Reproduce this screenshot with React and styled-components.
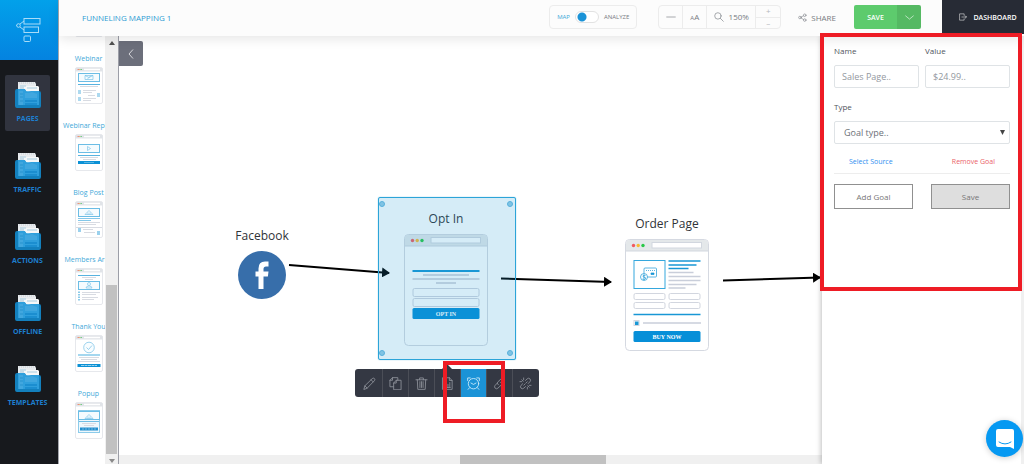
import React from 'react';
import styled, { createGlobalStyle, ThemeProvider } from 'styled-components';

const theme = {
  blue: '#1b93d7',
  lightBlue: '#3fa9d9',
  dark: '#343843',
  green: '#5dcb6d',
  red: '#ee1c25',
};

const GlobalStyle = createGlobalStyle`
  * {
    box-sizing: border-box;
  }

  body {
    background: #fff;
    color: #50545c;
    font-family: "Open Sans", "Noto Sans", sans-serif;
    font-size: 8px;
    margin: 0;
  }

  button, input, select {
    font-family: inherit;
    margin: 0;
  }

  button {
    cursor: pointer;
    padding: 0;
  }

  svg {
    display: block;
    flex: none;
  }
`;

const Shell = styled.div`
  display: flex;
  height: 100vh;
  overflow: hidden;
`;

/* Sidebar */

const Sidebar = styled.nav`
  background: #17191d;
  border-right: 1px solid #a5a7ae;
  flex: none;
  width: 59px;
`;

const Logo = styled.a`
  align-items: center;
  background: linear-gradient(#02a1ea, #0483e0);
  display: flex;
  height: 60px;
  justify-content: center;
`;

const SideList = styled.div`
  display: flex;
  flex-direction: column;
  gap: 15px;
  padding: 15px 8px 0 5px;
`;

const SideItem = styled.a`
  align-items: center;
  background: ${props => (props.$active ? '#31343f' : 'transparent')};
  border-radius: 2px;
  color: #1d7fd0;
  display: flex;
  flex-direction: column;
  font-size: 7px;
  font-weight: 700;
  gap: 6px;
  height: 56px;
  line-height: 10px;
  padding-top: 7px;
  text-decoration: none;
`;

/* Header */

const Main = styled.div`
  display: flex;
  flex: 1;
  flex-direction: column;
  min-width: 0;
`;

const Header = styled.header`
  align-items: center;
  background: #fcfcfc;
  box-shadow: 0 3px 12px rgba(0, 0, 0, 0.1);
  display: flex;
  flex: none;
  height: 36px;
  padding-left: 23px;
  position: relative;
  z-index: 2;
`;

const Title = styled.h1`
  color: #2d9bd3;
  flex: 1;
  font-size: 8px;
  font-weight: 400;
  margin: 0 0 2px;
`;

const Group = styled.div`
  align-items: center;
  border: 1px solid #ececec;
  border-radius: 4px;
  display: flex;
  height: 24px;
  margin-bottom: 2px;
`;

const ModeGroup = styled(Group)`
  gap: 5px;
  justify-content: center;
  margin-right: 21px;
  width: 88px;
`;

const ModeLabel = styled.span`
  color: ${props => (props.$active ? '#3fa9d9' : '#777b82')};
  font-size: 6px;
`;

const Switch = styled.input`
  appearance: none;
  background: radial-gradient(circle at 6px 5px, #1b93d7 4px, #fff 5px);
  border: 1px solid #e2e2e2;
  border-radius: 6px;
  height: 12px;
  margin: 0;
  width: 24px;
`;

const ZoomGroup = styled(Group)`
  margin-right: 17px;
`;

const ZoomCell = styled.button`
  align-items: ${props => (props.$letters ? 'baseline' : 'center')};
  background: none;
  border: 0;
  border-right: 1px solid #ececec;
  color: #777b82;
  display: flex;
  font-size: 8px;
  gap: ${props => (props.$letters ? 0 : 5)}px;
  height: 100%;
  justify-content: center;
  line-height: 22px;
  width: ${props => (props.$wide ? '49px' : '24px')};
`;

const SmallLetter = styled.span`
  font-size: 6px;
`;

const Stepper = styled.div`
  display: flex;
  flex-direction: column;
  height: 100%;
  width: 24px;
`;

const Step = styled.button`
  align-items: center;
  background: none;
  border: 0;
  color: #b5b7bb;
  display: flex;
  flex: 1;
  font-size: 8px;
  justify-content: center;
  line-height: 8px;

  & + & {
    border-top: 1px solid #ececec;
  }
`;

const Share = styled.button`
  align-items: center;
  background: none;
  border: 0;
  color: #777b82;
  display: flex;
  font-size: 8px;
  gap: 4px;
  margin: 0 18px 2px 0;
`;

const SaveGroup = styled.div`
  border-radius: 2px;
  display: flex;
  height: 24px;
  margin: 0 21px 2px 0;
  overflow: hidden;
`;

const SaveButton = styled.button`
  align-items: center;
  background: ${props => (props.$menu ? '#55b963' : props.theme.green)};
  border: 0;
  color: #fff;
  display: flex;
  font-size: 7px;
  font-weight: 600;
  justify-content: center;
  width: ${props => (props.$menu ? '24px' : '43px')};
`;

const Dashboard = styled.a`
  align-items: center;
  align-self: flex-start;
  background: #272b35;
  color: #fff;
  display: flex;
  font-size: 7px;
  font-weight: 600;
  gap: 6px;
  height: 34px;
  justify-content: center;
  padding-left: 10px;
  text-decoration: none;
  width: 82px;
`;

/* Thumbnails */

const Body = styled.div`
  display: flex;
  flex: 1;
  min-height: 0;
`;

const Library = styled.aside`
  border-right: 1px solid #9c9ea7;
  display: flex;
  flex: none;
  width: 60px;
`;

const LibraryView = styled.div`
  display: flex;
  flex: 1;
  flex-direction: column;
  gap: 15px;
  justify-content: flex-end;
  overflow: hidden;
  padding-bottom: 25px;
`;

const Thumb = styled.a`
  align-items: center;
  color: ${props => props.theme.lightBlue};
  display: flex;
  flex: none;
  flex-direction: column;
  font-size: 7px;
  gap: 2px;
  line-height: 13px;
  text-decoration: none;
  white-space: nowrap;
  width: 59px;
`;

const VScroll = styled.div`
  align-items: center;
  background: #f0f0f0;
  display: flex;
  flex-direction: column;
  padding: 5px 0 1px;
  width: 13px;
`;

const VThumb = styled.div`
  background: #c1c1c1;
  height: 40%;
  margin: auto 0 5px;
  width: 11px;
`;

/* Canvas */

const CanvasColumn = styled.main`
  display: flex;
  flex: 1;
  flex-direction: column;
  min-width: 0;
`;

const Canvas = styled.div`
  flex: 1;
  overflow: hidden;
  position: relative;
`;

const HScroll = styled.div`
  background: #f0f0f0;
  display: flex;
  height: 9px;
  justify-content: center;
`;

const HThumb = styled.div`
  background: #c1c1c1;
  margin-left: 124px;
  width: 146px;
`;

const Collapse = styled.button`
  align-items: center;
  background: #6c6f7b;
  border: 0;
  border-radius: 0 2px 2px 0;
  display: flex;
  height: 25px;
  justify-content: center;
  left: 0;
  position: absolute;
  top: 5px;
  width: 24px;
`;

const Node = styled.div`
  align-items: center;
  color: #303338;
  display: flex;
  flex-direction: column;
  font-size: 12px;
  gap: 7px;
  left: ${props => props.$x}px;
  line-height: 16px;
  position: absolute;
  top: ${props => props.$y}px;
  width: 84px;
`;

const Arrows = styled.svg`
  left: 0;
  overflow: visible;
  position: absolute;
  top: 0;
`;

const Selection = styled.div`
  background: rgba(31, 155, 212, 0.19);
  border: 1px solid #2ca4d8;
  border-radius: 2px;
  box-shadow: 0 0 1px #2ca4d8;
  height: 163px;
  left: 259px;
  position: absolute;
  top: 161px;
  width: 138px;
`;

const Handle = styled.i`
  background: #80c3e4;
  border: 1px solid #58b1dc;
  border-radius: 50%;
  height: 6px;
  position: absolute;
  width: 6px;
  ${props => props.$v}: 3px;
  ${props => props.$h}: ${props => (props.$h === 'left' ? '0' : '2px')};
`;

const Toolbar = styled.div`
  background: ${props => props.theme.dark};
  border-radius: 3px;
  display: flex;
  height: 28px;
  left: 236px;
  padding: 0 1px;
  position: absolute;
  top: 333px;

  &::before {
    border: 5px solid transparent;
    border-bottom-color: ${props => props.theme.dark};
    border-top: 0;
    bottom: 100%;
    content: "";
    left: calc(50% - 5px);
    position: absolute;
  }
`;

const Tool = styled.button`
  align-items: center;
  background: ${props => (props.$active ? props.theme.blue : 'transparent')};
  border: 0;
  color: ${props => (props.$active ? '#d5eefb' : '#92959e')};
  display: flex;
  justify-content: center;
  width: 26px;

  & + & {
    border-left: 1px solid #4b4e57;
  }
`;

const Highlight = styled.div`
  border: 4px solid ${props => props.theme.red};
  pointer-events: none;
  position: absolute;
  z-index: 3;
`;

const ToolHighlight = styled(Highlight)`
  height: 62px;
  left: 324px;
  top: 325px;
  width: 62px;
`;

const PanelHighlight = styled(Highlight)`
  height: 258px;
  left: -2px;
  right: -1px;
  top: -3px;
`;

/* Goal panel */

const Panel = styled.aside`
  background: #fff;
  border-right: 3px solid #f0f0f0;
  box-shadow: -1px 0 5px rgba(0, 0, 0, 0.25);
  flex: none;
  padding: 8px 11px 0 12px;
  position: relative;
  width: 202px;
`;

const Form = styled.form`
  display: flex;
  flex-direction: column;
`;

const Fields = styled.div`
  display: grid;
  gap: 6px;
  grid-template-columns: 1fr 1fr;
  margin-bottom: 12px;
`;

const Field = styled.label`
  color: #50545c;
  display: flex;
  flex-direction: column;
  font-size: 8px;
  gap: 7px;
  line-height: 14px;
  min-width: 0;
`;

const Input = styled.input`
  background: #fff;
  border: 1px solid #dfe3e6;
  border-radius: 2px;
  font-size: 9px;
  height: 23px;
  padding: 0 7px;
  width: 100%;

  &::placeholder {
    color: #9398a0;
  }
`;

const SelectBox = styled.span`
  align-items: center;
  display: grid;

  & > * {
    grid-area: 1 / 1;
  }

  svg {
    justify-self: end;
    margin-right: 5px;
    pointer-events: none;
  }
`;

const Select = styled.select`
  appearance: none;
  background: #fff;
  border: 1px solid #dfe3e6;
  border-radius: 2px;
  color: #6c7178;
  font-size: 9px;
  height: 23px;
  padding: 0 9px;
  width: 100%;
`;

const Links = styled.div`
  border-bottom: 1px solid #ededed;
  display: flex;
  justify-content: space-between;
  margin-bottom: 10px;
  padding: 11px 15px 4px;
`;

const LinkButton = styled.button`
  background: none;
  border: 0;
  color: ${props => (props.$danger ? '#ea5f69' : '#2f8ff0')};
  font-size: 7px;
  line-height: 14px;
`;

const Actions = styled.div`
  display: grid;
  gap: 18px;
  grid-template-columns: 1fr 1fr;
`;

const Action = styled.button`
  background: ${props => (props.$filled ? '#dedede' : '#fff')};
  border: 1px solid #909090;
  color: #777;
  font-size: 8px;
  height: 25px;
`;

const Launcher = styled.button`
  align-items: center;
  background: #0699f2;
  border: 0;
  border-radius: 50%;
  bottom: 7px;
  box-shadow: 0 1px 6px rgba(0, 0, 0, 0.2);
  display: flex;
  height: 37px;
  justify-content: center;
  position: fixed;
  right: 1px;
  width: 37px;
  z-index: 4;
`;

/* Icons */

const Icon = ({ size = 14, box = 14, children }) => (
  <svg
    width={size}
    height={size}
    viewBox={`0 0 ${box} ${box}`}
    fill="none"
    stroke="currentColor"
    strokeWidth="0.9"
    strokeLinejoin="round"
    strokeLinecap="round"
  >
    {children}
  </svg>
);

const LogoIcon = () => (
  <svg width="26" height="26" viewBox="0 0 26 26" fill="none" stroke="#a9dcf8" strokeWidth="1">
    <rect x="8" y="1.5" width="16" height="5.5" />
    <rect x="8" y="10" width="14.5" height="5.5" />
    <rect x="8" y="19" width="6.5" height="5.5" rx="1" />
    <circle cx="2.5" cy="8.5" r="1.8" />
    <path d="M4 7 8 4M4 10 8 13M0 8.5h.7" />
  </svg>
);

const FolderIcon = () => (
  <svg width="26" height="26" viewBox="0 0 26 26">
    <path d="M3 0h17l1 2v13H3z" fill="#e8ebee" />
    <path d="M4 1h16" stroke="#c7ced4" strokeDasharray="1 1" />
    <path d="M9 4h14l1 1v13H9z" fill="#f5f7f8" />
    <path d="M12 6h10M5 4h6M5 6h4" stroke="#a9cde0" />
    <path d="M0 9q0-2 2-2h7q1 0 2 2h13q2 0 2 2v13q0 2-2 2H2q-2 0-2-2z" fill="#1380bd" />
    <path d="M3 7h6q1 0 2 2h13v14H3z" fill="#2f9fdc" />
    <path d="M11 9q4 1 8-1l4 1z" fill="#f5f7f8" />
    <path d="M4 9h4v14H4zM10 11h4l3-1 5 2v4H10z" fill="#53b0e2" opacity="0.5" />
    <path d="M10 19h12M10 22h12" stroke="#1689cb" strokeWidth="1.5" />
    <path d="M5 12h3M5 15h3M5 19h3" stroke="#1687c7" strokeWidth="0.6" />
  </svg>
);

const tools = [
  {
    label: 'Edit',
    icon: <path d="m1 13 1-3.500L10 1.700q1.300-1 2.300 0t0 2.300L4.500 12zM8.700 3 11 5.300M2 9.500 4.500 12" />,
  },
  {
    label: 'Duplicate',
    icon: <path d="M4.500 10.500H1v-7L3.800.7h5.700v2.800M1 3.500h2.800V.7M5 13.300V6.500l2.800-3H13v9.800zM5 6.500h2.800v-3" />,
  },
  {
    label: 'Delete',
    icon: <path d="M1 3h12M5 3V1h4v2M2.500 3l.5 10.300h8l.5-10.300M5.300 5v6.300M7 5v6.300M8.700 5v6.300" />,
  },
  {
    label: 'Stats',
    icon: <path d="M2 .8h7l3 3v9.500H2zM9 .8v3h3M4.500 11V8M6 11V6.500M7.500 11V8M9.500 11V6M4 11.300h6" />,
  },
  {
    label: 'Goals',
    active: true,
    icon: (
      <>
        <circle cx="7" cy="7.200" r="5.600" />
        <path d="M4.300 6.500 7 8l2.700-1.500M.7 3.800V1h2.800M13.300 3.800V1h-2.800M2.800 11.500 1.200 13.300M11.200 11.500l1.600 1.800" />
      </>
    ),
  },
  {
    label: 'Link',
    icon: <path d="m6 8.500-1-1q-.8-1 0-2L8.700 2q1.600-1.400 3 0t0 3L9.500 7.300M8 5.500l1 1q.8 1 0 2L5.300 12q-1.600 1.400-3 0t0-3l2.200-2.300" />,
  },
  {
    label: 'Unlink',
    icon: <path d="M7 3.700 8.800 2q1.600-1.400 3 0t0 3L10 7M7 10.300 5.200 12q-1.600 1.400-3 0t0-3L4 7.200M8.800 5.200 7.500 6.500M5.200 8.800l1.300-1.300M3 3l1.500 1.500M5 1v2M1 5h2M9.500 9.500 11 11M9 11v2M11 9h2" />,
  },
];

const Frame = ({ children }) => (
  <svg width="28" height="37" viewBox="0 0 28 37">
    <rect x="0.5" y="0.5" width="27" height="36" rx="1.500" fill="#fff" stroke="#e6e8ec" />
    <path d="M0.500 1h27v3.500h-27z" fill="#e1e4e8" />
    <path d="M9 2.500h16" stroke="#fff" strokeWidth="1.500" />
    <path d="M2.500 2.500h1.500" stroke="#ec8c83" />
    <path d="M4 2.500h1.500" stroke="#e5c078" />
    <path d="M5.500 2.500H7" stroke="#72ce8b" />
    {children}
  </svg>
);

const Picture = ({ y, children }) => (
  <g fill="none" stroke="#6bbde5">
    <rect x="3.500" y={y + 0.5} width="21" height="8" fill="#f5fbfe" />
    <g strokeWidth="0.6">{children}</g>
  </g>
);

const Lines = ({ d, color = '#d8dbe2' }) => <path d={d} stroke={color} />;

const thumbs = [
  { name: '', art: null },
  {
    name: 'Webinar',
    art: (
      <>
        <Picture y={6}><path d="M10 8.500h8v4h-8zM10 8.500l4 2 4-2M12 12.500l4-4" /></Picture>
        <Lines d="M3 17.500h22" color="#58b3e0" />
        <Lines d="M5 19.500h18M8 23.500h13M8 25.500h9M13 28.500h7M8 31.500h13M8 33.500h8" />
        <g fill="#add9ef"><path d="M3 23h3v4H3zM22 26h3v4h-3zM3 30h3v4H3z" /></g>
      </>
    ),
  },
  {
    name: 'Webinar Replay',
    art: (
      <>
        <Picture y={10}><path d="m12.500 12.500 3 2-3 2z" /></Picture>
        <Lines d="M3 21.500h22" color="#58b3e0" />
        <Lines d="M5 23.500h18M8 25.500h13" />
        <path d="M3 27h22v3H3z" fill="#0b91d5" />
        <path d="M9 28.500h10" stroke="#8cccec" strokeWidth="0.600" />
      </>
    ),
  },
  {
    name: 'Blog Post',
    art: (
      <>
        <Picture y={7}><path d="m10 13.500 4-4 4 4zM13 11.500v2M15 11.500v2" /></Picture>
        <Lines d="M3 17.500h22M3 19.500h13" color="#83c7e9" />
        <Lines d="M3 21.500h22M3 23.500h18M1 26.500h26M8 28.500h10M9 31.500h11" />
        <g fill="#9bd1ed"><path d="M3 27h3v4H3zM22 30h3v4h-3z" /></g>
      </>
    ),
  },
  {
    name: 'Members Area',
    art: (
      <>
        <Lines d="M3 7.500h22" color="#58b3e0" />
        <Lines d="M7 9.500h14M10 11.500h8M7 24.500h18M7 26.500h14M7 29.500h16M7 31.500h12" />
        <Picture y={13}><circle cx="14" cy="16" r="1.500" /><path d="M11 20q0-2 3-2t3 2z" /></Picture>
        <path d="M4 23.500v10" stroke="#65b9e2" strokeWidth="1.500" strokeDasharray="1.500 1" />
      </>
    ),
  },
  {
    name: 'Thank You',
    art: (
      <>
        <circle cx="14" cy="12.500" r="5.300" fill="#f8fdff" stroke="#72bfe5" strokeWidth="0.700" />
        <path d="m11.500 12.500 2 2 3.500-4" fill="none" stroke="#72bfe5" strokeWidth="0.700" />
        <path d="M3 20h22" stroke="#a4d7ef" strokeWidth="2" />
        <Lines d="M4 22.500h20M6 24.500h16M3 26.500h22" />
        <path d="M2.500 29h23v3h-23z" fill="#0b91d5" />
        <path d="M6 30.500h16" stroke="#b6def2" strokeWidth="0.800" strokeDasharray="3 0.500" />
      </>
    ),
  },
  {
    name: 'Popup',
    art: (
      <>
        <rect x="3.500" y="8.500" width="21" height="22" fill="#edf8fd" stroke="#8ccbea" />
        <Picture y={9}><path d="m10 16.500 4-4 4 4zM13 14.500v2M15 14.500v2" /></Picture>
        <Lines d="M4 19.500h20" color="#6dbde4" />
        <Lines d="M7 21.500h14M9 23.500h10" />
        <path d="M5 25.500h18v3H5z" fill="#218fce" />
        <path d="M7 27h14" stroke="#a3d4ee" strokeWidth="0.600" strokeDasharray="2 1" />
      </>
    ),
  },
];

const PageArt = ({ children }) => (
  <svg width="84" height="112" viewBox="0 0 84 112">
    <rect x="0.500" y="0.500" width="83" height="111" rx="4" fill="#fff" stroke="#d5d9e1" />
    <path d="M1 12V4.500Q1 1 4.500 1h75Q83 1 83 4.500V12z" fill="#e4e8ea" />
    <path d="M1 12h82" stroke="#d2d7df" />
    <circle cx="8.500" cy="6.500" r="1.700" fill="#f15a60" />
    <circle cx="13.200" cy="6.500" r="1.700" fill="#f8bb33" />
    <circle cx="18" cy="6.500" r="1.700" fill="#28c847" />
    <rect x="27" y="3.500" width="49.500" height="5.500" fill="#fff" stroke="#d2d7df" />
    {children}
  </svg>
);

const ArtButton = ({ y, children }) => (
  <>
    <rect x="8.500" y={y} width="67" height="11" rx="1.500" fill="#078fd8" />
    <text
      x="42"
      y={y + 7.600}
      fill="#fff"
      fontFamily="Liberation Serif, serif"
      fontSize="6"
      fontWeight="700"
      textAnchor="middle"
    >
      {children}
    </text>
  </>
);

const OptInArt = () => (
  <PageArt>
    <path d="M8.500 37h67" stroke="#1897d5" strokeWidth="2" />
    <path d="M19 41h46M8.500 45h67M32 49h20" stroke="#c7ccd8" strokeWidth="1.500" />
    <g fill="#fff" stroke="#d0d4df">
      <rect x="9" y="54.500" width="66" height="8" rx="1.500" />
      <rect x="9" y="64.500" width="66" height="8" rx="1.500" />
    </g>
    <ArtButton y={74}>OPT IN</ArtButton>
  </PageArt>
);

const OrderArt = () => (
  <PageArt>
    <rect x="9" y="21.500" width="31" height="28" fill="#fff" stroke="#35a7dd" />
    <g fill="#fff" stroke="#1897d5" strokeWidth="0.700">
      <rect x="19" y="29" width="12.500" height="9" rx="1" />
      <path d="M21 31.500h9" strokeDasharray="1 1" />
      <path d="M26 34h3v1.500h-3z" fill="#1897d5" />
      <circle cx="19" cy="38" r="3.500" />
      <path d="M20.500 36.500q-2.500-1-2.500.5t2 1.500-.5 2l-2-.500M19 35.500v5" fill="none" />
    </g>
    <path d="M43.500 22h32M43.500 26h28M43.500 29.500h20" stroke="#1897d5" strokeWidth="1.500" />
    <path d="M43.500 33.500h25M43.500 37.500h32M43.500 41.500h32M43.500 45.500h28M43.500 49h17M18 84h58" stroke="#c9ceda" strokeWidth="1.500" />
    <g fill="#fff" stroke="#d2d6df">
      <rect x="9" y="54.500" width="31" height="6" rx="1.500" />
      <rect x="44" y="54.500" width="31" height="6" rx="1.500" />
      <rect x="9" y="63.500" width="31" height="6" rx="1.500" />
      <rect x="44" y="63.500" width="31" height="6" rx="1.500" />
      <rect x="9" y="81.500" width="5" height="5" />
    </g>
    <path d="M8.500 75.500h67" stroke="#1897d5" strokeWidth="1.500" />
    <path d="M10 82.500h3.500V86H10z" fill="#1897d5" />
    <ArtButton y={92}>BUY NOW</ArtButton>
  </PageArt>
);

const FacebookIcon = () => (
  <svg width="48" height="48" viewBox="0 0 48 48">
    <circle cx="24" cy="24" r="24" fill="#376eaa" />
    <path d="M20.500 38V25.500H17.500V20.500h3v-3q0-7 6.500-7h3.500v5h-2.500q-2.500 0-2.500 2.500v2.500h5l-.6 5h-4.400V38z" fill="#fff" />
  </svg>
);

const App = () => (
  <ThemeProvider theme={theme}>
    <GlobalStyle />
    <Shell>
      <Sidebar>
        <Logo href="#home" aria-label="Home"><LogoIcon /></Logo>
        <SideList>
          {['PAGES', 'TRAFFIC', 'ACTIONS', 'OFFLINE', 'TEMPLATES'].map((name, i) => (
            <SideItem key={name} href={`#${name.toLowerCase()}`} $active={i === 0}>
              <FolderIcon />
              {name}
            </SideItem>
          ))}
        </SideList>
      </Sidebar>

      <Main>
        <Header>
          <Title>FUNNELING MAPPING 1</Title>
          <ModeGroup>
            <ModeLabel $active>MAP</ModeLabel>
            <Switch type="checkbox" aria-label="Analyze mode" />
            <ModeLabel>ANALYZE</ModeLabel>
          </ModeGroup>
          <ZoomGroup>
            <ZoomCell aria-label="Line style">
              <Icon size={10}><path d="M1 7h12" /></Icon>
            </ZoomCell>
            <ZoomCell aria-label="Text size" $letters><SmallLetter>A</SmallLetter>A</ZoomCell>
            <ZoomCell $wide>
              <Icon size={10}><circle cx="5.500" cy="5.500" r="4.500" /><path d="m9 9 4 4" /></Icon>
              150%
            </ZoomCell>
            <Stepper>
              <Step aria-label="Zoom in">+</Step>
              <Step aria-label="Zoom out">–</Step>
            </Stepper>
          </ZoomGroup>
          <Share>
            <Icon size={9}>
              <circle cx="3" cy="7" r="2" />
              <circle cx="10.500" cy="3.500" r="2" />
              <circle cx="10.500" cy="11" r="2" />
              <path d="m5 6 3.500-1.500M5 8l3.500 2" />
            </Icon>
            SHARE
          </Share>
          <SaveGroup>
            <SaveButton>SAVE</SaveButton>
            <SaveButton $menu aria-label="Save options">
              <Icon size={9}><path d="m1 4.500 6 5 6-5" /></Icon>
            </SaveButton>
          </SaveGroup>
          <Dashboard href="#dashboard">
            <Icon size={8}><path d="M9 4V1.500H1v11h8V10M5 7h8M11 5l2 2-2 2" /></Icon>
            DASHBOARD
          </Dashboard>
        </Header>

        <Body>
          <Library>
            <LibraryView>
              {thumbs.map(({ name, art }) => (
                <Thumb key={name} href={`#${name}`}>
                  {name}
                  <Frame>{art}</Frame>
                </Thumb>
              ))}
            </LibraryView>
            <VScroll>
              <svg width="6" height="4" viewBox="0 0 6 4"><path d="m0 4 3-4 3 4z" fill="#505050" /></svg>
              <VThumb />
              <svg width="6" height="4" viewBox="0 0 6 4"><path d="m0 0 3 4 3-4z" fill="#8a8a8a" /></svg>
            </VScroll>
          </Library>

          <CanvasColumn>
            <Canvas>
              <Collapse aria-label="Collapse library">
                <svg width="6" height="10" viewBox="0 0 6 10" fill="none" stroke="#d5d6da">
                  <path d="M5 0.500 1 5l4 4.500" />
                </svg>
              </Collapse>
              <Node $x={101} $y={192}>
                Facebook
                <FacebookIcon />
              </Node>
              <Node $x={285} $y={175}>
                Opt In
                <OptInArt />
              </Node>
              <Node $x={506} $y={180}>
                Order Page
                <OrderArt />
              </Node>
              <Arrows width="703" height="419" viewBox="0 0 703 419" fill="none" stroke="#000" strokeWidth="2">
                <defs>
                  <marker id="head" viewBox="0 0 8 10" refX="7" refY="5" markerWidth="8" markerHeight="10" markerUnits="userSpaceOnUse" orient="auto">
                    <path d="M0 0 8 5 0 10z" fill="#000" stroke="none" />
                  </marker>
                </defs>
                <path d="m170 229 100 8" markerEnd="url(#head)" />
                <path d="m382 242.500 110 3.500" markerEnd="url(#head)" />
                <path d="m604 244.500 97-3" markerEnd="url(#head)" />
              </Arrows>
              <Selection>
                <Handle $v="top" $h="left" />
                <Handle $v="top" $h="right" />
                <Handle $v="bottom" $h="left" />
                <Handle $v="bottom" $h="right" />
              </Selection>
              <Toolbar>
                {tools.map(({ label, icon, active }) => (
                  <Tool key={label} aria-label={label} $active={active}>
                    <Icon size={13}>{icon}</Icon>
                  </Tool>
                ))}
              </Toolbar>
              <ToolHighlight />
            </Canvas>
            <HScroll><HThumb /></HScroll>
          </CanvasColumn>

          <Panel>
            <Form onSubmit={e => e.preventDefault()}>
              <Fields>
                <Field>Name<Input placeholder="Sales Page.." /></Field>
                <Field>Value<Input placeholder="$24.99.." /></Field>
              </Fields>
              <Field>
                Type
                <SelectBox>
                  <Select><option>Goal type..</option></Select>
                  <svg width="5" height="5" viewBox="0 0 5 5"><path d="M0 0h5L2.500 5z" fill="#444" /></svg>
                </SelectBox>
              </Field>
              <Links>
                <LinkButton type="button">Select Source</LinkButton>
                <LinkButton type="button" $danger>Remove Goal</LinkButton>
              </Links>
              <Actions>
                <Action type="button">Add Goal</Action>
                <Action $filled>Save</Action>
              </Actions>
            </Form>
            <PanelHighlight />
          </Panel>
        </Body>
      </Main>
      <Launcher aria-label="Open chat">
        <svg width="18" height="20" viewBox="0 0 18 20">
          <path d="M2 0h14q2 0 2 2v18l-4-2H2q-2 0-2-2V2q0-2 2-2z" fill="#fff" />
          <path d="M3 13q6 4 12 0" fill="none" stroke="#0699f2" strokeLinecap="round" />
        </svg>
      </Launcher>
    </Shell>
  </ThemeProvider>
);

export default App;
